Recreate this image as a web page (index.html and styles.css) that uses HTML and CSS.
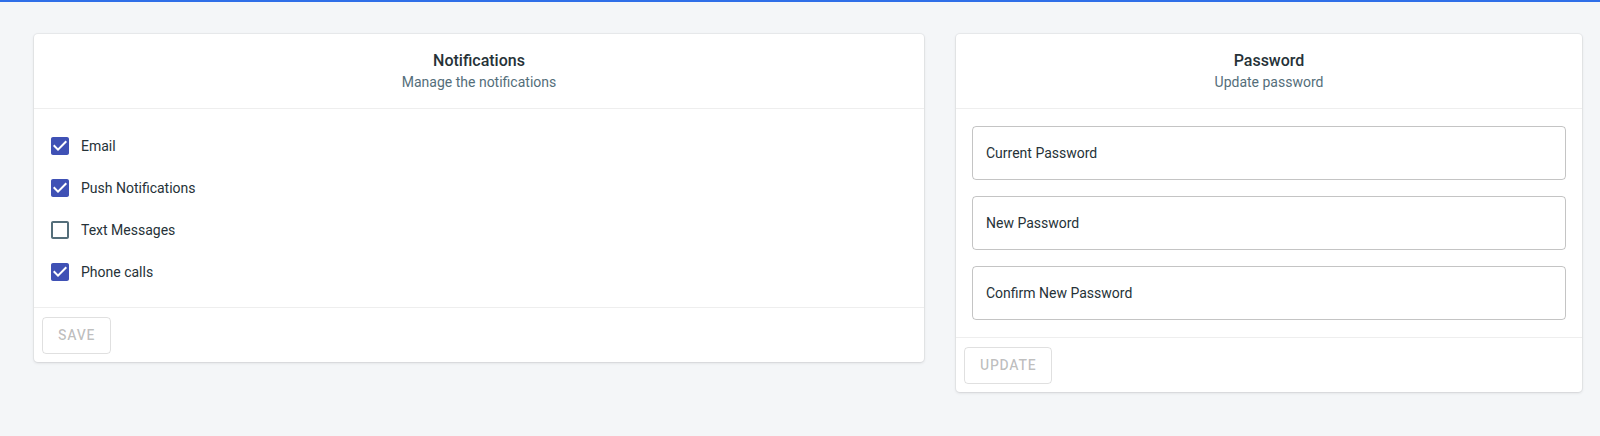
FILE: index.html
```html
<!DOCTYPE html>
<html lang="en">
<head>
<meta charset="utf-8">
<title>Settings</title>
<link rel="stylesheet" href="styles.css">
</head>
<body>
<div class="topline"></div>
<main class="page">
  <section class="card card-notifications">
    <header class="card-header">
      <div class="card-title">Notifications</div>
      <div class="card-subtitle">Manage the notifications</div>
    </header>
    <div class="divider"></div>
    <div class="card-content checks">
      <label class="check-row">
        <span class="check-box">
          <svg viewBox="0 0 24 24" class="icon checked"><path d="M19 3H5c-1.11 0-2 .9-2 2v14c0 1.1.89 2 2 2h14c1.11 0 2-.9 2-2V5c0-1.1-.89-2-2-2zm-9 14l-5-5 1.410-1.41L10 14.17l7.59-7.59L19 8l-9 9z"/></svg>
        </span>
        <span class="check-label">Email</span>
      </label>
      <label class="check-row">
        <span class="check-box">
          <svg viewBox="0 0 24 24" class="icon checked"><path d="M19 3H5c-1.11 0-2 .9-2 2v14c0 1.1.89 2 2 2h14c1.11 0 2-.9 2-2V5c0-1.1-.89-2-2-2zm-9 14l-5-5 1.41-1.41L10 14.17l7.59-7.59L19 8l-9 9z"/></svg>
        </span>
        <span class="check-label">Push Notifications</span>
      </label>
      <label class="check-row">
        <span class="check-box">
          <svg viewBox="0 0 24 24" class="icon unchecked"><path d="M19 5v14H5V5h14m0-2H5c-1.1 0-2 .9-2 2v14c0 1.1.9 2 2 2h14c1.1 0 2-.9 2-2V5c0-1.1-.9-2-2-2z"/></svg>
        </span>
        <span class="check-label">Text Messages</span>
      </label>
      <label class="check-row">
        <span class="check-box">
          <svg viewBox="0 0 24 24" class="icon checked"><path d="M19 3H5c-1.11 0-2 .9-2 2v14c0 1.1.89 2 2 2h14c1.11 0 2-.9 2-2V5c0-1.1-.89-2-2-2zm-9 14l-5-5 1.41-1.41L10 14.17l7.59-7.59L19 8l-9 9z"/></svg>
        </span>
        <span class="check-label">Phone calls</span>
      </label>
    </div>
    <div class="divider"></div>
    <footer class="card-actions">
      <button class="btn" disabled>Save</button>
    </footer>
  </section>

  <section class="card card-password">
    <header class="card-header">
      <div class="card-title">Password</div>
      <div class="card-subtitle">Update password</div>
    </header>
    <div class="divider"></div>
    <div class="card-content fields">
      <div class="field"><span class="field-label">Current Password</span></div>
      <div class="field"><span class="field-label">New Password</span></div>
      <div class="field"><span class="field-label">Confirm New Password</span></div>
    </div>
    <div class="divider"></div>
    <footer class="card-actions">
      <button class="btn" disabled>Update</button>
    </footer>
  </section>
</main>
</body>
</html>
```

FILE: styles.css
```css
* { box-sizing: border-box; }

html, body {
  margin: 0;
  padding: 0;
}

body {
  background: #f4f6f8;
  font-family: Roboto, "Noto Sans", "Liberation Sans", sans-serif;
  color: #263238;
  height: 436px;
  overflow: hidden;
}

.topline {
  height: 2px;
  background: #2f6fe8;
}

.page {
  display: flex;
  align-items: flex-start;
  gap: 32px;
  padding: 32px 18px 0 34px;
}

.card {
  background: #ffffff;
  border-radius: 4px;
  box-shadow: 0 0 0 1px rgba(63, 63, 68, 0.05), 0 1px 3px 0 rgba(63, 63, 68, 0.15);
  display: flex;
  flex-direction: column;
}

.card-notifications { width: 890px; }
.card-password { width: 626px; }

.card-header {
  padding: 16px;
  text-align: center;
}

.card-title {
  font-size: 16px;
  line-height: 22px;
  font-weight: 500;
  color: #263238;
}

.card-subtitle {
  font-size: 14px;
  line-height: 20px;
  color: #546e7a;
}

.divider {
  height: 1px;
  background: #eeeeee;
}

.checks {
  padding: 16px 16px 14px 16px;
  display: flex;
  flex-direction: column;
}

.check-row {
  display: flex;
  align-items: center;
  height: 42px;
  margin-left: -11px;
  cursor: pointer;
}

.check-box {
  display: flex;
  padding: 9px;
}

.icon {
  width: 24px;
  height: 24px;
  display: block;
}

.icon.checked { fill: #3f51b5; }
.icon.unchecked { fill: #546e7a; }

.check-label {
  font-size: 14px;
  line-height: 20px;
  color: #263238;
}

.fields {
  padding: 17px 16px;
  display: flex;
  flex-direction: column;
  gap: 16px;
}

.field {
  height: 54px;
  border: 1px solid rgba(0, 0, 0, 0.23);
  border-radius: 4px;
  display: flex;
  align-items: center;
  padding-left: 13px;
}

.field-label {
  font-size: 14px;
  line-height: 20px;
  color: #263238;
}

.card-actions {
  padding: 9px 8px 8px 8px;
  display: flex;
}

.btn {
  font-family: Roboto, "Noto Sans", "Liberation Sans", sans-serif;
  font-size: 14px;
  font-weight: 500;
  line-height: 25px;
  letter-spacing: 0.75px;
  text-transform: uppercase;
  color: rgba(0, 0, 0, 0.26);
  background: transparent;
  border: 1px solid rgba(0, 0, 0, 0.12);
  border-radius: 4px;
  padding: 5px 15px;
  min-width: 64px;
}
```
